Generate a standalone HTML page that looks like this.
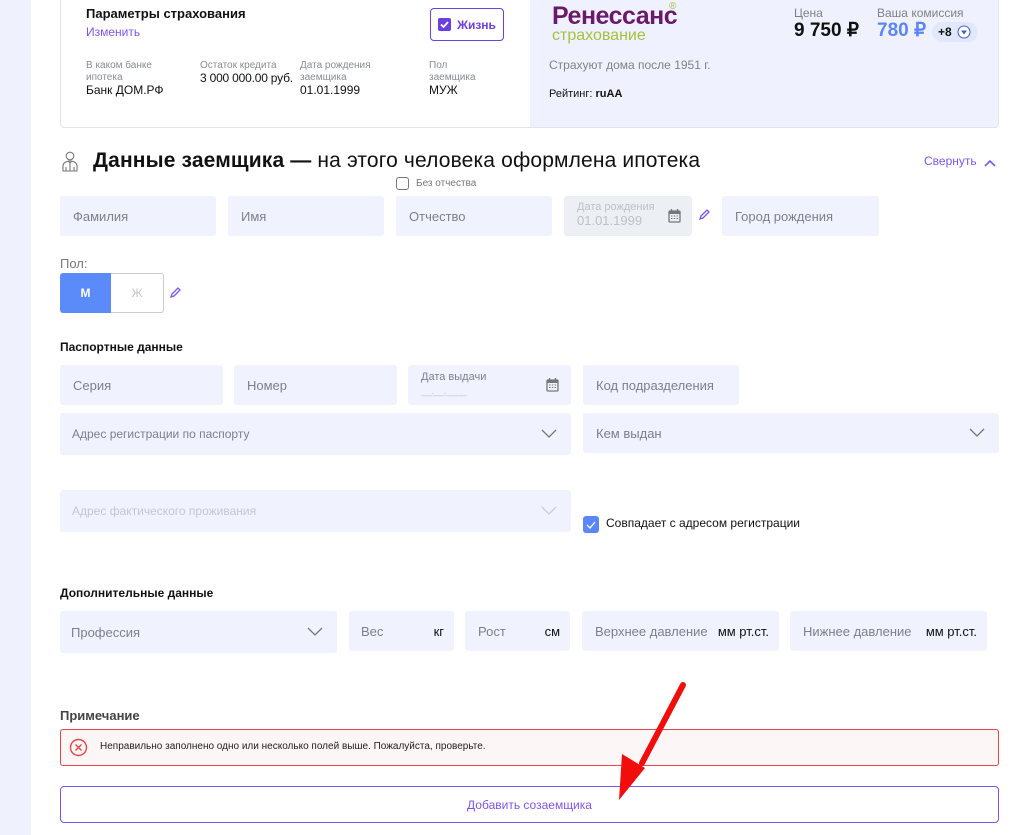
<!DOCTYPE html>
<html><head><meta charset="utf-8"><style>
*{margin:0;padding:0;box-sizing:border-box}
body{width:1018px;height:835px;position:relative;overflow:hidden;background:#fff;font-family:"Liberation Sans","Noto Sans CJK SC",sans-serif;color:#111}
.a{position:absolute}
.f{position:absolute;background:#f0f3fe;border-radius:3px;color:#7d808a;font-size:13px;padding-left:13px;display:flex;align-items:center}
.lbl{position:absolute;font-size:13px;font-weight:bold;color:#111}
.small{font-size:10px;color:#8a8c94;line-height:12px}
.chev{position:absolute;right:14px;top:50%;margin-top:-5px}
.unit{position:absolute;right:10px;color:#111;font-size:13px}
</style></head><body>
<div class="a" style="left:0;top:0;width:31px;height:835px;background:#eff1fc"></div>

<div class="a" style="left:60px;top:-6px;width:939px;height:134px;border:1px solid #e2e3e8;border-radius:4px;background:#fff;overflow:hidden">
  <div class="a" style="left:469px;top:0;width:470px;height:134px;background:#eff2fe"></div>
</div>
<div class="a" style="left:86px;top:6px;font-size:13px;font-weight:bold">Параметры страхования</div>
<div class="a" style="left:86px;top:25px;font-size:12px;color:#7b55f0">Изменить</div>
<div class="a" style="left:430px;top:8px;width:74px;height:33px;border:1.5px solid #6b3fe0;border-radius:4px;display:flex;align-items:center;justify-content:center;gap:6px;font-size:12px;font-weight:bold;color:#6b3fe0">
 <svg width="13" height="13"><rect width="13" height="13" rx="2" fill="#6b3fe0"/><path d="M3 6.5l2.5 2.5 4.5-5" stroke="#fff" stroke-width="1.8" fill="none"/></svg>Жизнь</div>
<div class="a small" style="left:86px;top:60px">В каком банке<br>ипотека</div>
<div class="a" style="left:86px;top:83px;font-size:12px">Банк ДОМ.РФ</div>
<div class="a small" style="left:200px;top:60px">Остаток кредита</div>
<div class="a" style="left:200px;top:71px;font-size:12px;letter-spacing:-0.2px">3 000 000.00 руб.</div>
<div class="a small" style="left:300px;top:60px">Дата рождения<br>заемщика</div>
<div class="a" style="left:300px;top:83px;font-size:12px">01.01.1999</div>
<div class="a small" style="left:429px;top:60px">Пол<br>заемщика</div>
<div class="a" style="left:429px;top:83px;font-size:12px">МУЖ</div>

<div class="a" style="left:552px;top:2px;font-size:25px;font-weight:bold;color:#6b1a6b;letter-spacing:-0.5px">Ренессанс</div>
<div class="a" style="left:669px;top:1px;font-size:10px;color:#a6c13a">®</div>
<div class="a" style="left:552px;top:27px;font-size:16px;color:#a6c13a">страхование</div>
<div class="a" style="left:549px;top:58px;font-size:12px;color:#808288">Страхуют дома после 1951 г.</div>
<div class="a" style="left:549px;top:88px;font-size:11px;color:#111">Рейтинг: <b>ruAA</b></div>
<div class="a" style="left:794px;top:6px;font-size:12px;color:#808288">Цена</div>
<div class="a" style="left:794px;top:19px;font-size:19px;font-weight:bold">9 750 ₽</div>
<div class="a" style="left:877px;top:6px;font-size:12px;color:#808288">Ваша комиссия</div>
<div class="a" style="left:877px;top:19px;font-size:19px;font-weight:bold;color:#5b86f8">780 ₽</div>
<div class="a" style="left:932px;top:22px;width:46px;height:20px;border-radius:10px;background:#e2e8fb;font-size:12px;font-weight:bold;padding-left:6px;line-height:20px">+8<svg class="a" style="left:25px;top:3px" width="14" height="14"><circle cx="7" cy="7" r="6" fill="#fff" stroke="#3f5bd8"/><path d="M4 5.5h6L7 9.5z" fill="#3f5bd8"/></svg></div>

<svg class="a" style="left:62px;top:151px" width="16" height="21" viewBox="0 0 16 21"><circle cx="8" cy="5" r="3.8" fill="none" stroke="#777" stroke-width="1.1"/><path d="M1 20v-5c0-3 3-5 7-5s7 2 7 5v5zM6 10l2 2 2-2M8 12v8M4 16v4M12 16v4" fill="none" stroke="#777" stroke-width="1.1"/></svg>
<div class="a" style="left:93px;top:149px;font-size:21px;white-space:nowrap;letter-spacing:0.15px"><b>Данные заемщика —</b> на этого человека оформлена ипотека</div>
<div class="a" style="left:924px;top:154px;font-size:12px;color:#7b55f0">Свернуть</div>
<svg class="a" style="left:984px;top:159px" width="12" height="8"><path d="M1 7l5-5 5 5" stroke="#7b55f0" stroke-width="1.6" fill="none"/></svg>

<div class="a" style="left:396px;top:177px;width:13px;height:13px;border:1px solid #777;border-radius:3px"></div>
<div class="a" style="left:416px;top:178px;font-size:10px;color:#777">Без отчества</div>

<div class="f" style="left:60px;top:196px;width:156px;height:40px">Фамилия</div>
<div class="f" style="left:228px;top:196px;width:156px;height:40px">Имя</div>
<div class="f" style="left:396px;top:196px;width:156px;height:40px">Отчество</div>
<div class="f" style="left:564px;top:196px;width:128px;height:40px;background:#eceff4;color:#bfc1c7;display:block;padding-top:5px;font-size:11px;line-height:13px">Дата рождения<br><span style="font-size:13px">01.01.1999</span>
<svg class="a" style="left:104px;top:12px" width="13" height="15"><rect x="1" y="3" width="11" height="11" rx="1" fill="none" stroke="#777" stroke-width="1.3"/><rect x="1" y="3" width="11" height="3" fill="#777"/><path d="M3.5 1v3M9.5 1v3" stroke="#777" stroke-width="1.3"/><path d="M3 8h1.5M5.8 8h1.5M8.6 8h1.5M3 10.5h1.5M5.8 10.5h1.5M8.6 10.5h1.5" stroke="#777"/></svg></div>
<svg class="a" style="left:698px;top:208px" width="13" height="13"><path d="M2 11l1-3 6-6 2 2-6 6z" fill="none" stroke="#7b55f0" stroke-width="1.3"/></svg>
<div class="f" style="left:722px;top:196px;width:157px;height:40px">Город рождения</div>

<div class="a" style="left:60px;top:256px;font-size:13px;color:#777">Пол:</div>
<div class="a" style="left:60px;top:273px;width:51px;height:40px;background:#5b8af9;border-radius:3px 0 0 3px;color:#fff;font-size:12px;font-weight:bold;display:flex;align-items:center;justify-content:center">М</div>
<div class="a" style="left:111px;top:273px;width:53px;height:40px;border:1px solid #ccc;border-left:none;border-radius:0 3px 3px 0;color:#c4c4c4;font-size:12px;display:flex;align-items:center;justify-content:center">Ж</div>
<svg class="a" style="left:169px;top:286px" width="13" height="13"><path d="M2 11l1-3 6-6 2 2-6 6z" fill="none" stroke="#7b55f0" stroke-width="1.3"/></svg>

<div class="lbl" style="left:60px;top:340px;font-size:12px">Паспортные данные</div>
<div class="f" style="left:60px;top:365px;width:163px;height:40px">Серия</div>
<div class="f" style="left:234px;top:365px;width:163px;height:40px">Номер</div>
<div class="f" style="left:408px;top:365px;width:163px;height:40px;display:block;padding-top:5px;font-size:11px;line-height:14px">Дата выдачи<br><span style="color:#ccc;letter-spacing:-1px">__.__.____</span>
<svg class="a" style="left:138px;top:12px" width="13" height="15"><rect x="1" y="3" width="11" height="11" rx="1" fill="none" stroke="#777" stroke-width="1.3"/><rect x="1" y="3" width="11" height="3" fill="#777"/><path d="M3.5 1v3M9.5 1v3" stroke="#777" stroke-width="1.3"/><path d="M3 8h1.5M5.8 8h1.5M8.6 8h1.5M3 10.5h1.5M5.8 10.5h1.5M8.6 10.5h1.5" stroke="#777"/></svg></div>
<div class="f" style="left:583px;top:365px;width:156px;height:40px">Код подразделения</div>

<div class="f" style="left:60px;top:413px;width:511px;height:42px;font-size:12px;padding-left:12px">Адрес регистрации по паспорту<svg class="chev" width="16" height="9"><path d="M1 1l7 7 7-7" stroke="#777" stroke-width="1.3" fill="none"/></svg></div>
<div class="f" style="left:583px;top:413px;width:416px;height:40px">Кем выдан<svg class="chev" width="16" height="9"><path d="M1 1l7 7 7-7" stroke="#777" stroke-width="1.3" fill="none"/></svg></div>

<div class="f" style="left:60px;top:490px;width:511px;height:42px;font-size:12px;padding-left:12px;color:#c4c6cf">Адрес фактического проживания<svg class="chev" width="16" height="9"><path d="M1 1l7 7 7-7" stroke="#ccc" stroke-width="1.3" fill="none"/></svg></div>
<div class="a" style="left:583px;top:516px;width:16px;height:17px;background:#5b86f8;border-radius:3px"><svg width="16" height="17"><path d="M4 9l3 3 5-6" stroke="#fff" stroke-width="1.3" fill="none"/></svg></div>
<div class="a" style="left:606px;top:516px;font-size:12px">Совпадает с адресом регистрации</div>

<div class="lbl" style="left:60px;top:586px;font-size:12px">Дополнительные данные</div>
<div class="f" style="left:60px;top:611px;width:277px;height:42px;padding-left:11px">Профессия<svg class="chev" width="16" height="9"><path d="M1 1l7 7 7-7" stroke="#777" stroke-width="1.3" fill="none"/></svg></div>
<div class="f" style="left:349px;top:611px;width:105px;height:40px;padding-left:12px">Вес<span class="unit">кг</span></div>
<div class="f" style="left:465px;top:611px;width:105px;height:40px;padding-left:13px">Рост<span class="unit">см</span></div>
<div class="f" style="left:582px;top:611px;width:197px;height:40px;padding-left:13px">Верхнее давление<span class="unit">мм рт.ст.</span></div>
<div class="f" style="left:790px;top:611px;width:197px;height:40px;padding-left:13px">Нижнее давление<span class="unit">мм рт.ст.</span></div>

<div class="a" style="left:60px;top:708px;font-size:13px;font-weight:bold;color:#444">Примечание</div>
<div class="a" style="left:60px;top:729px;width:939px;height:37px;border:1px solid #e84545;border-radius:3px;background:#fdf6f6"></div>
<svg class="a" style="left:69px;top:738px" width="19" height="19"><circle cx="9.5" cy="9.5" r="8" fill="none" stroke="#e84545" stroke-width="1.4"/><path d="M6.5 6.5l6 6M12.5 6.5l-6 6" stroke="#e84545" stroke-width="1.4"/></svg>
<div class="a" style="left:100px;top:741px;font-size:10px;color:#222">Неправильно заполнено одно или несколько полей выше. Пожалуйста, проверьте.</div>
<div class="a" style="left:60px;top:786px;width:939px;height:37px;border:1.5px solid #7b55f0;border-radius:4px;display:flex;align-items:center;justify-content:center;font-size:12px;color:#7b55f0">Добавить созаемщика</div>

<svg class="a" style="left:600px;top:670px" width="100" height="140"><path d="M83 15L42 93" stroke="#f20d0d" stroke-width="6" stroke-linecap="round"/><path d="M19 130L22 84 45 98z" fill="#f20d0d"/></svg>
</body></html>
